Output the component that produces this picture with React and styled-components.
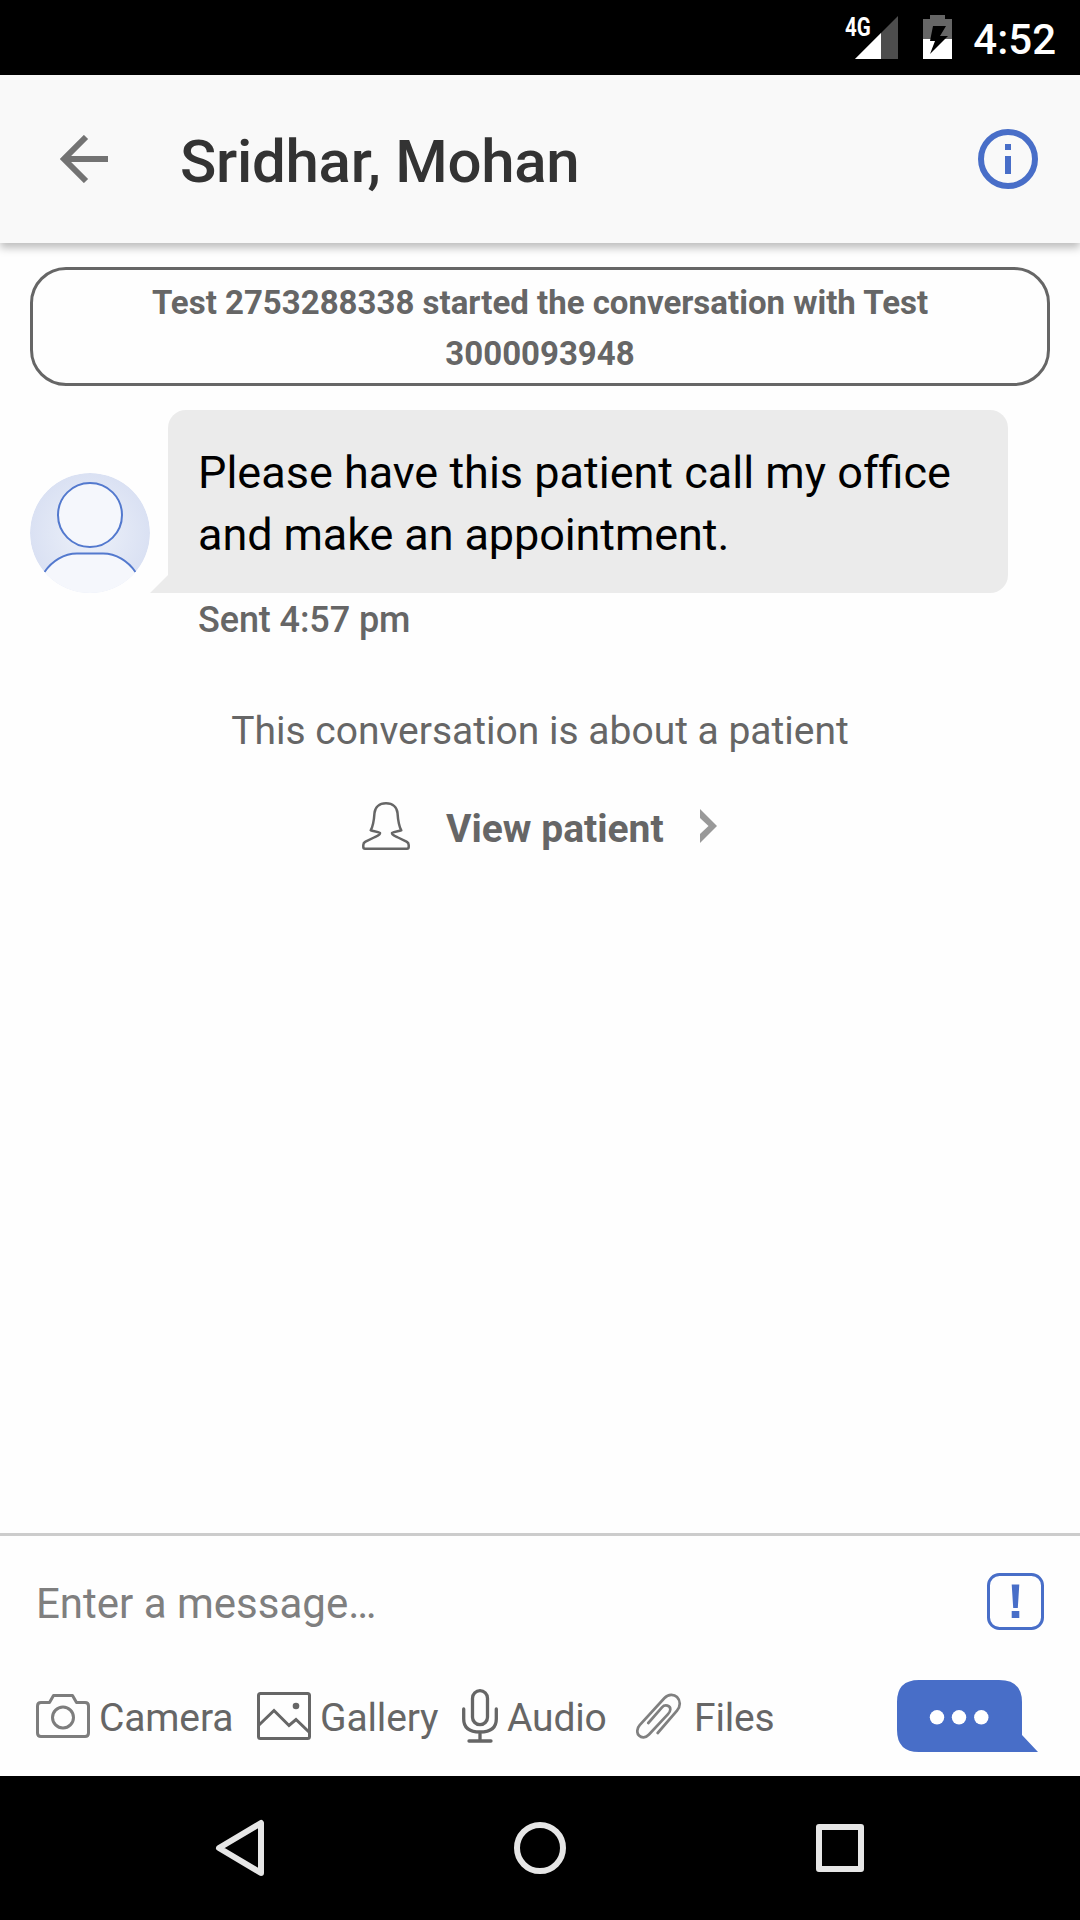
import React from "react";
import styled, { createGlobalStyle } from "styled-components";

const blue = "#486ec8";
const gray = "#666666";

const GlobalStyle = createGlobalStyle`
  html, body { margin: 0; padding: 0; background: #fff; }
  * { box-sizing: border-box; }
  svg { display: block; flex: none; }
  button { appearance: none; background: none; border: 0; padding: 0; margin: 0; font: inherit; color: inherit; }
`;

const Screen = styled.div`
  width: 1080px;
  height: 1920px;
  display: flex;
  flex-direction: column;
  overflow: hidden;
  background: #fefefe;
  font-family: Roboto, "Noto Sans", sans-serif;
`;

const StatusBar = styled.div`
  height: 75px;
  flex: none;
  display: flex;
  align-items: flex-start;
  justify-content: flex-end;
  padding: 15px 24px 0 0;
  background: #000;
  color: #fff;
`;

const Network = styled.span`
  width: 26px;
  margin: 1px -16px 0 0;
  font-size: 25px;
  line-height: 24px;
  font-weight: 700;
  transform: scaleX(0.82);
  transform-origin: left;
  z-index: 1;
`;

const BatteryIcon = styled.svg`
  margin: 0 21px 0 25px;
`;

const Clock = styled.span`
  font-size: 42px;
  line-height: 50px;
  font-weight: 500;
`;

const Header = styled.header`
  height: 168px;
  flex: none;
  display: flex;
  align-items: center;
  padding: 0 42px 0 60px;
  background: #f9f9f9;
  box-shadow: 0 5px 8px rgba(0, 0, 0, 0.25);
  z-index: 1;
`;

const Title = styled.h1`
  flex: 1;
  margin: 5px 0 0 72px;
  font-size: 60px;
  line-height: 70px;
  font-weight: 500;
  letter-spacing: -0.28px;
  color: #333;
`;

const Conversation = styled.main`
  flex: 1;
  display: flex;
  flex-direction: column;
  padding: 24px 30px 0;
`;

const Notice = styled.div`
  height: 119px;
  padding: 7px 100px 0;
  border: 3px solid ${gray};
  border-radius: 36px;
  color: ${gray};
  font-size: 33px;
  line-height: 51px;
  font-weight: 700;
  text-align: center;
`;

const MessageRow = styled.div`
  display: flex;
  align-items: flex-end;
  margin-top: 24px;
`;

const Bubble = styled.div`
  width: 840px;
  height: 183px;
  padding: 32px 30px 0;
  border-radius: 18px 18px 18px 0;
  background: #ebebeb;
  color: #000;
  font-size: 45px;
  line-height: 62px;
`;

const Spaced = styled.span`
  letter-spacing: ${(p) => p.$by}px;
`;

const Tail = styled.div`
  width: 18px;
  height: 18px;
  background: #ebebeb;
  clip-path: polygon(100% 0, 100% 100%, 0 100%);
`;

const Sent = styled.div`
  margin: 6px 0 0 168px;
  color: ${gray};
  font-size: 36px;
  line-height: 42px;
  font-weight: 500;
  letter-spacing: -0.1px;
`;

const About = styled.div`
  margin-top: 67px;
  color: ${gray};
  font-size: 39px;
  line-height: 46px;
  text-align: center;
`;

const ViewPatient = styled.button`
  display: flex;
  align-items: center;
  height: 48px;
  margin: 48px 0 0 332px;
  color: ${gray};
  font-size: 39px;
  line-height: 46px;
  font-weight: 700;
`;

const ViewLabel = styled.span`
  width: 254px;
  margin: 5px 0 0 36px;
  text-align: left;
`;

const Composer = styled.footer`
  height: 243px;
  flex: none;
  border-top: 3px solid #ccc;
`;

const InputRow = styled.div`
  height: 144px;
  display: flex;
  align-items: flex-start;
  justify-content: space-between;
  padding: 37px 36px 0;
`;

const Placeholder = styled.span`
  margin-top: 6px;
  color: #7f7f7f;
  font-size: 42px;
  line-height: 50px;
`;

const Actions = styled.div`
  height: 72px;
  display: flex;
  align-items: center;
  padding-left: 36px;
`;

const Action = styled.button`
  width: ${(p) => p.$width}px;
  display: flex;
  align-items: center;
  gap: ${(p) => p.$gap}px;
  flex: none;
  color: ${gray};
  font-size: 39px;
  line-height: 46px;
  letter-spacing: -0.15px;
  text-align: left;
`;

const ActionLabel = styled.span`
  padding-top: 4px;
`;

const SendIcon = styled.svg`
  margin-left: auto;
  margin-right: 42px;
`;

const NavBar = styled.nav`
  height: 144px;
  flex: none;
  display: flex;
  align-items: center;
  justify-content: space-between;
  padding: 0 210px;
  background: #000;
`;

export default function App() {
  return (
    <>
      <GlobalStyle />
      <Screen>
        <StatusBar>
          <Network>4G</Network>
          <svg width="43" height="44" viewBox="0 0 43 44">
            <path d="M0 44 43 1V44Z" fill="#4d4d4d" />
            <path d="M0 44 26 18V44Z" fill="#fff" />
          </svg>
          <BatteryIcon width="29" height="44" viewBox="0 0 29 44">
            <path d="M0 24V4H7V0H22V4H29V24Z" fill="#666" />
            <path d="M0 24H29V44H0Z" fill="#fff" />
            <path d="M10 11H23L17 21H25L7 39L12 26H7Z" fill="#000" />
          </BatteryIcon>
          <Clock>4:52</Clock>
        </StatusBar>

        <Header>
          <svg width="48" height="48" viewBox="0 0 48 48" fill="none" stroke="#737373" strokeWidth="6">
            <path d="M48 24H6M26 2 4 24l22 22" />
          </svg>
          <Title>Sridhar, Mohan</Title>
          <svg width="60" height="60" viewBox="0 0 60 60">
            <circle cx="30" cy="30" r="27" fill="none" stroke={blue} strokeWidth="6" />
            <path d="M27 15h6v6h-6zM27 27h6v18h-6z" fill={blue} />
          </svg>
        </Header>

        <Conversation>
          <Notice>Test 2753288338 started the conversation with Test 3000093948</Notice>
          <MessageRow>
            <svg width="120" height="120" viewBox="0 0 120 120">
              <defs>
                <radialGradient id="avatarFill">
                  <stop offset="0" stopColor="#edf1f9" />
                  <stop offset="1" stopColor="#dae1f3" />
                </radialGradient>
                <clipPath id="avatarClip">
                  <circle cx="60" cy="60" r="60" />
                </clipPath>
              </defs>
              <g clipPath="url(#avatarClip)">
                <circle cx="60" cy="60" r="60" fill="url(#avatarFill)" />
                <path d="M14.5 99C22 88 34 80.5 47 80.5H73C86 80.5 98 88 105.5 99V120H14.5Z" fill="#f5f7fc" />
                <path d="M14.5 99C22 88 34 80.5 47 80.5H73C86 80.5 98 88 105.5 99" fill="none" stroke="#5379ce" strokeWidth="2" />
                <circle cx="60" cy="42" r="32" fill="#f5f7fc" stroke="#5379ce" strokeWidth="2" />
              </g>
            </svg>
            <Tail />
            <Bubble>
              Please have this patient call my <Spaced $by={0.01}>of</Spaced>fice{" "}
              <Spaced $by={-0.1}>and make an appointment.</Spaced>
            </Bubble>
          </MessageRow>
          <Sent>Sent 4:57 pm</Sent>
          <About>This conversation is about a patient</About>
          <ViewPatient>
            <svg width="48" height="48" viewBox="0 0 48 48" fill="none" stroke={gray} strokeWidth="2.5" strokeLinejoin="round">
              <path d="M24 1.3C17 1.3 13 5.5 12.5 11C12 18 11 24.5 8.700 28.3C12 29.3 16 29.5 18 31C18.5 33 15 34 12 35.5L3.5 39.7C2 40.5 1.3 41.5 1.3 43V45Q1.3 46.7 3 46.7H45Q46.7 46.7 46.7 45V43C46.7 41.5 46 40.5 44.5 39.7L36 35.5C33 34 29.5 33 30 31C32 29.5 36 29.3 39.3 28.3C37 24.5 36 18 35.5 11C35 5.5 31 1.3 24 1.3Z" />
            </svg>
            <ViewLabel>View patient</ViewLabel>
            <svg width="17" height="34" viewBox="0 0 17 34">
              <path d="M0 0 17 17 0 34V25L8.5 17 0 9Z" fill="#999" />
            </svg>
          </ViewPatient>
        </Conversation>

        <Composer>
          <InputRow>
            <Placeholder>Enter a message…</Placeholder>
            <svg width="57" height="57" viewBox="0 0 57 57">
              <rect x="1.5" y="1.5" width="54" height="54" rx="11" fill="none" stroke={blue} strokeWidth="3" />
              <path d="M24.7 11.5H32.3L30.8 35H26.2ZM24.7 38H32.3V45H24.7Z" fill={blue} />
            </svg>
          </InputRow>
          <Actions>
            <Action $width={221} $gap={9}>
              <svg width="54" height="44" viewBox="0 0 54 44" fill="none" stroke="#7d7d7d" strokeWidth="3" strokeLinejoin="round">
                <path d="M5 8.5H13.5L17.5 1.5H36.5L40.5 8.5H49Q52.5 8.5 52.5 12V39Q52.5 42.5 49 42.5H5Q1.5 42.5 1.5 39V12Q1.5 8.5 5 8.5Z" />
                <circle cx="27" cy="23.5" r="10.5" />
              </svg>
              <ActionLabel>Camera</ActionLabel>
            </Action>
            <Action $width={205} $gap={9}>
              <svg width="54" height="48" viewBox="0 0 54 48" fill="none" stroke={gray} strokeWidth="3">
                <rect x="1.5" y="1.5" width="51" height="45" rx="2" />
                <path d="M2 33 17 18.5 32 33.5 39 27.5 52 40" />
                <circle cx="39" cy="14" r="3.3" fill={gray} stroke="none" />
              </svg>
              <ActionLabel>Gallery</ActionLabel>
            </Action>
            <Action $width={174} $gap={9}>
              <svg width="36" height="54" viewBox="0 0 36 54" fill="none" stroke={gray} strokeWidth="3.3" strokeLinecap="round">
                <rect x="10.5" y="1.7" width="15" height="34" rx="7.5" />
                <path d="M1.7 20V30C1.7 39 8 43 18 43S34.3 39 34.3 30V20M18 43V52M7 52H29" />
              </svg>
              <ActionLabel>Audio</ActionLabel>
            </Action>
            <Action $width={150} $gap={12}>
              <svg width="46" height="46" viewBox="0 0 46 46" fill="none" stroke="#808080" strokeWidth="2.7" strokeLinecap="round" strokeLinejoin="round">
                <path d="M12.3 30 26 14.3C29 11 34.5 12.5 34.3 16.5C34.2 18.5 33.3 19.8 32 21.2L13 41.5C9.5 45.2 5.500 45 3 42.5C.5 40 .8 35.500 3.700 32.2L28.5 5C32.5 .8 38 1 41 4C44.800 7.800 44.500 13.500 41 17.700L21.7 40" />
              </svg>
              <ActionLabel>Files</ActionLabel>
            </Action>
            <SendIcon width="141" height="72" viewBox="0 0 141 72">
              <path d="M22 0H102Q125 0 125 22V55L141 72H22Q0 72 0 50V22Q0 0 22 0Z" fill={blue} />
              <circle cx="40" cy="37.3" r="7.2" fill="#fff" />
              <circle cx="62" cy="37.3" r="7.2" fill="#fff" />
              <circle cx="84.3" cy="37.3" r="7.2" fill="#fff" />
            </SendIcon>
          </Actions>
        </Composer>

        <NavBar>
          <svg width="60" height="60" viewBox="0 0 60 60" fill="none" stroke="#e6e6e6" strokeWidth="6" strokeLinejoin="round">
            <path d="M51 5V55L9 30Z" />
          </svg>
          <svg width="60" height="60" viewBox="0 0 60 60" fill="none" stroke="#e6e6e6" strokeWidth="6">
            <circle cx="30" cy="30" r="23" />
          </svg>
          <svg width="60" height="60" viewBox="0 0 60 60" fill="none" stroke="#e6e6e6" strokeWidth="6" strokeLinejoin="round">
            <rect x="9" y="9" width="42" height="42" />
          </svg>
        </NavBar>
      </Screen>
    </>
  );
}
